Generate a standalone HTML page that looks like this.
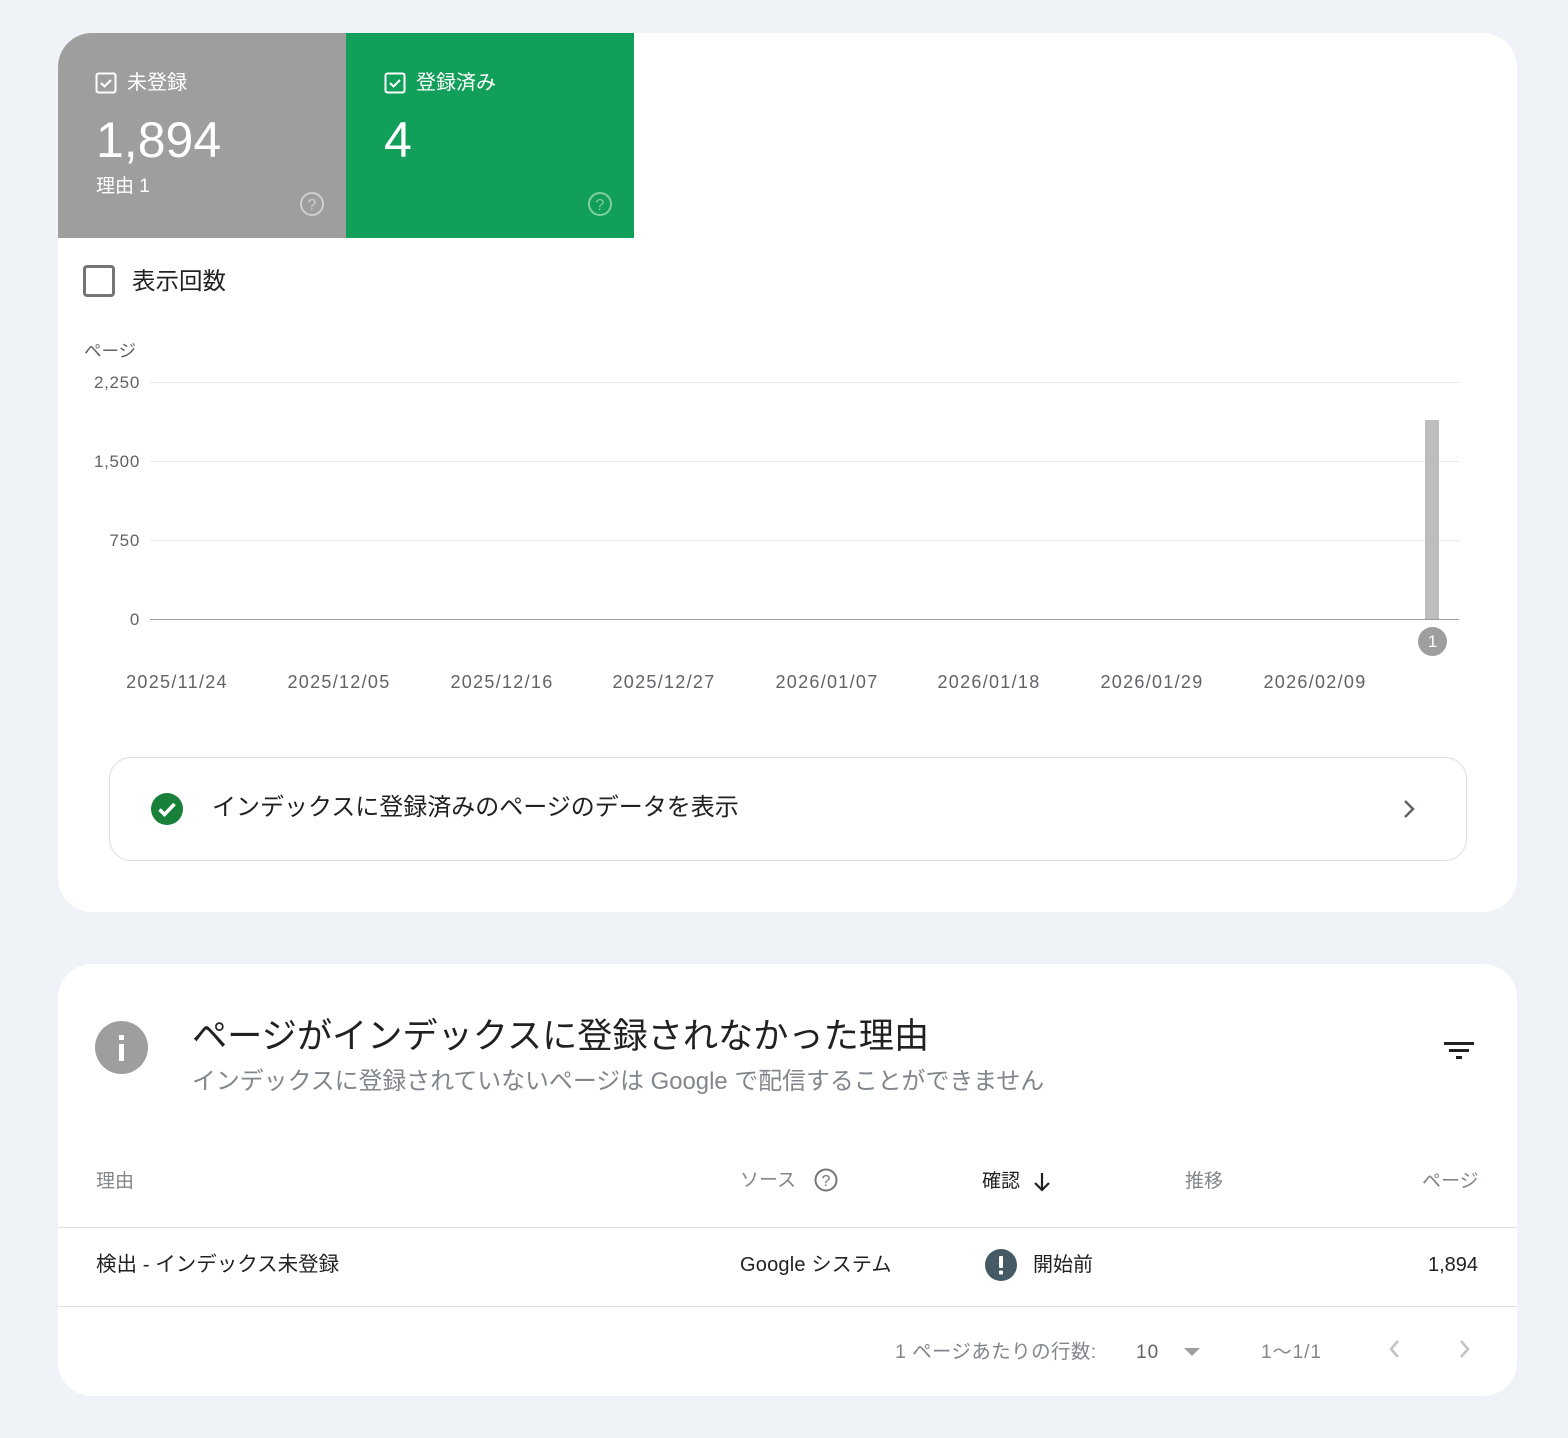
<!DOCTYPE html>
<html><head><meta charset="utf-8"><style>
*{box-sizing:border-box;margin:0;padding:0}
body{width:1568px;height:1438px;background:#eff3f8;font-family:"Liberation Sans","Noto Sans CJK JP",sans-serif;position:relative;overflow:hidden;color:#202124}
.a{position:absolute;white-space:nowrap;line-height:1}
.card{position:absolute;left:58px;width:1459px;background:#fff;border-radius:34px;overflow:hidden}
.gl{position:absolute;left:150px;width:1309px;height:1px;background:#e8e8e8}
.xl{position:absolute;top:673px;font-size:18px;color:#5f6368;width:160px;text-align:center;line-height:1;letter-spacing:1.3px}
.yl{position:absolute;right:1428px;font-size:17px;color:#5f6368;line-height:1;letter-spacing:0.7px}
</style></head><body>
<div class="card" style="top:33px;height:879px">
  <div class="a" style="left:0;top:0;width:288px;height:205px;background:#9e9e9e"></div>
  <div class="a" style="left:288px;top:0;width:288px;height:205px;background:#129f59"></div>
</div>
<!-- tile 1 -->
<svg class="a" style="left:95px;top:72px" width="22" height="22" viewBox="0 0 22 22"><rect x="1.5" y="1.5" width="19" height="19" rx="2" fill="none" stroke="#fff" stroke-width="2"/><path d="M6 11l3.5 3.5L16 8" fill="none" stroke="#fff" stroke-width="2"/></svg>
<div class="a" style="left:127px;top:73px;font-size:20px;color:#fff">未登録</div>
<div class="a" style="left:96px;top:115px;font-size:50px;color:#fff">1,894</div>
<div class="a" style="left:96px;top:177px;font-size:19px;color:#fff">理由 1</div>
<svg class="a" style="left:299px;top:191px" width="26" height="26" viewBox="0 0 26 26"><circle cx="13" cy="13" r="11" fill="none" stroke="#d0d0d0" stroke-width="2"/><text x="13" y="19" font-size="16" fill="#d0d0d0" text-anchor="middle" font-family="Liberation Sans">?</text></svg>
<!-- tile 2 -->
<svg class="a" style="left:384px;top:72px" width="22" height="22" viewBox="0 0 22 22"><rect x="1.5" y="1.5" width="19" height="19" rx="2" fill="none" stroke="#fff" stroke-width="2"/><path d="M6 11l3.5 3.5L16 8" fill="none" stroke="#fff" stroke-width="2"/></svg>
<div class="a" style="left:416px;top:73px;font-size:20px;color:#fff">登録済み</div>
<div class="a" style="left:384px;top:115px;font-size:50px;color:#fff">4</div>
<svg class="a" style="left:587px;top:191px" width="26" height="26" viewBox="0 0 26 26"><circle cx="13" cy="13" r="11" fill="none" stroke="#7fcfa6" stroke-width="2"/><text x="13" y="19" font-size="16" fill="#7fcfa6" text-anchor="middle" font-family="Liberation Sans">?</text></svg>
<!-- checkbox -->
<div class="a" style="left:83px;top:265px;width:32px;height:32px;border:3px solid #757575;border-radius:4px"></div>
<div class="a" style="left:132px;top:270px;font-size:23.5px;color:#202124">表示回数</div>
<!-- chart -->
<div class="a" style="left:84px;top:343px;font-size:17.5px;color:#5f6368">ページ</div>
<div class="yl" style="top:374px">2,250</div>
<div class="yl" style="top:453px">1,500</div>
<div class="yl" style="top:532px">750</div>
<div class="yl" style="top:611px">0</div>
<div class="gl" style="top:382px"></div>
<div class="gl" style="top:461px"></div>
<div class="gl" style="top:540px"></div>
<div class="gl" style="top:619px;background:#9e9e9e"></div>
<div class="a" style="left:1425px;top:420px;width:14px;height:199px;background:#bdbdbd"></div>
<div class="a" style="left:1418px;top:627px;width:29px;height:29px;border-radius:50%;background:#9e9e9e;color:#fff;font-size:17px;text-align:center;line-height:29px">1</div>
<div class="xl" style="left:97px">2025/11/24</div>
<div class="xl" style="left:259px">2025/12/05</div>
<div class="xl" style="left:422px">2025/12/16</div>
<div class="xl" style="left:584px">2025/12/27</div>
<div class="xl" style="left:747px">2026/01/07</div>
<div class="xl" style="left:909px">2026/01/18</div>
<div class="xl" style="left:1072px">2026/01/29</div>
<div class="xl" style="left:1235px">2026/02/09</div>
<!-- banner -->
<div class="a" style="left:109px;top:757px;width:1358px;height:104px;border:1px solid #dadce0;border-radius:22px"></div>
<svg class="a" style="left:150px;top:792px" width="34" height="34" viewBox="0 0 34 34"><circle cx="17" cy="17" r="16" fill="#188038"/><path d="M9.5 17.5l5 5L24.5 12" fill="none" stroke="#fff" stroke-width="3.5"/></svg>
<div class="a" style="left:212px;top:796px;font-size:24px;color:#202124">インデックスに登録済みのページのデータを表示</div>
<svg class="a" style="left:1400px;top:798px" width="20" height="22" viewBox="0 0 20 22"><path d="M5 3l8 8-8 8" fill="none" stroke="#5f6368" stroke-width="2.5"/></svg>
<!-- card 2 -->
<div class="card" style="top:964px;height:432px"></div>
<svg class="a" style="left:95px;top:1021px" width="53" height="53" viewBox="0 0 53 53"><circle cx="26.5" cy="26.5" r="26.5" fill="#9e9e9e"/><rect x="24" y="23" width="5" height="17" fill="#fff"/><rect x="24" y="14" width="5" height="5" fill="#fff"/></svg>
<div class="a" style="left:192px;top:1019px;font-size:35.2px;color:#202124">ページがインデックスに登録されなかった理由</div>
<div class="a" style="left:192px;top:1070px;font-size:23.9px;color:#80868b">インデックスに登録されていないページは Google で配信することができません</div>
<svg class="a" style="left:1440px;top:1039px" width="40" height="26" viewBox="0 0 40 26"><rect x="4" y="3" width="30" height="3" fill="#202124"/><rect x="9" y="10" width="20" height="3" fill="#202124"/><rect x="16" y="17" width="6" height="3" fill="#202124"/></svg>
<div class="a" style="left:96px;top:1172px;font-size:19px;color:#80868b">理由</div>
<div class="a" style="left:740px;top:1171px;font-size:19px;color:#80868b">ソース</div>
<svg class="a" style="left:813px;top:1167px" width="26" height="26" viewBox="0 0 26 26"><circle cx="13" cy="13" r="10.5" fill="none" stroke="#757575" stroke-width="2"/><text x="13" y="19" font-size="16" fill="#757575" text-anchor="middle" font-family="Liberation Sans">?</text></svg>
<div class="a" style="left:982px;top:1172px;font-size:19px;color:#202124">確認</div>
<svg class="a" style="left:1031px;top:1170px" width="22" height="24" viewBox="0 0 22 24"><path d="M11 3v17M4 13l7 7 7-7" fill="none" stroke="#202124" stroke-width="2.2"/></svg>
<div class="a" style="left:1185px;top:1172px;font-size:19px;color:#80868b">推移</div>
<div class="a" style="left:1422px;top:1172px;font-size:19px;color:#80868b">ページ</div>
<div class="a" style="left:58px;top:1227px;width:1459px;height:1px;background:#e0e0e0"></div>
<div class="a" style="left:96px;top:1255px;font-size:20.5px;color:#202124">検出 - インデックス未登録</div>
<div class="a" style="left:740px;top:1255px;font-size:20px;color:#202124;letter-spacing:0.2px">Google システム</div>
<svg class="a" style="left:985px;top:1249px" width="32" height="32" viewBox="0 0 32 32"><circle cx="16" cy="16" r="16" fill="#455a64"/><rect x="14" y="7" width="4" height="12" rx="1" fill="#fff"/><rect x="14" y="21.5" width="4" height="4" rx="1" fill="#fff"/></svg>
<div class="a" style="left:1033px;top:1255px;font-size:20px;color:#202124">開始前</div>
<div class="a" style="left:1428px;top:1255px;font-size:20px;color:#202124">1,894</div>
<div class="a" style="left:58px;top:1306px;width:1459px;height:1px;background:#e0e0e0"></div>
<div class="a" style="left:895px;top:1343px;font-size:19.5px;color:#80868b;letter-spacing:0.4px">1 ページあたりの行数:</div>
<div class="a" style="left:1136px;top:1343px;font-size:19px;color:#5f6368;letter-spacing:1px">10</div>
<svg class="a" style="left:1182px;top:1346px" width="20" height="12" viewBox="0 0 20 12"><path d="M2 2h16l-8 8z" fill="#9e9e9e"/></svg>
<div class="a" style="left:1261px;top:1343px;font-size:19px;color:#80868b;letter-spacing:1px">1〜1/1</div>
<svg class="a" style="left:1385px;top:1338px" width="20" height="22" viewBox="0 0 20 22"><path d="M13 3l-7 8 7 8" fill="none" stroke="#c4c4c4" stroke-width="2.5"/></svg>
<svg class="a" style="left:1455px;top:1338px" width="20" height="22" viewBox="0 0 20 22"><path d="M6 3l7 8-7 8" fill="none" stroke="#c4c4c4" stroke-width="2.5"/></svg>
</body></html>
